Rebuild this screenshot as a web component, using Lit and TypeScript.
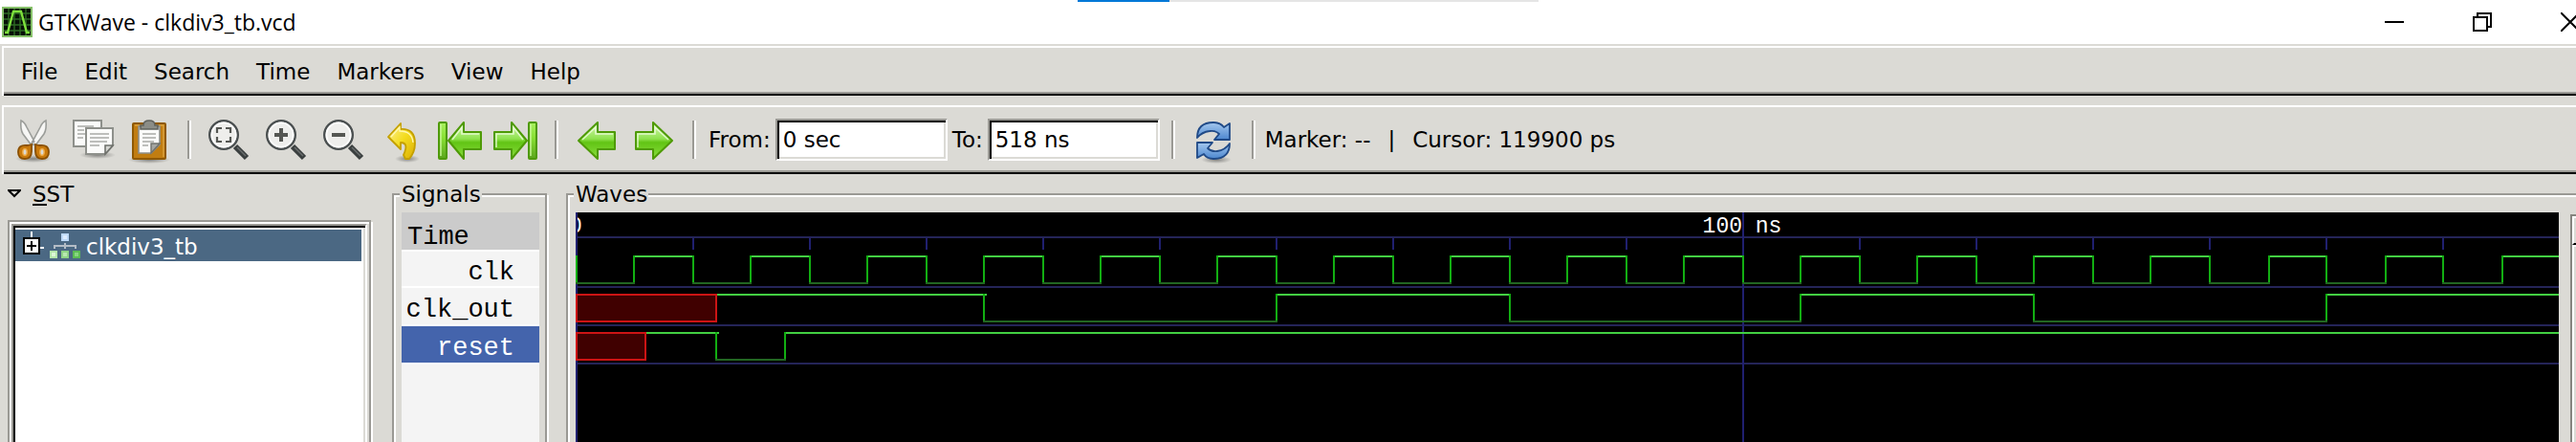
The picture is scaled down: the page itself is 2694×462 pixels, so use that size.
import { LitElement, html, svg, css } from "lit";
import { customElement, property } from "lit/decorators.js";

type Segment = { from: number; to: number; level: "0" | "1" | "x" };
type Signal = { name: string; selected?: boolean; segments: Segment[] };

const STEPS_PER_NS = 6.1035; // each step is two pixels wide
const SPAN = 180;

const timeToX = (t: number) => 2 * Math.floor(t * STEPS_PER_NS);

const clockSegments = (): Segment[] => {
  const out: Segment[] = [];
  for (let t = 0; t < SPAN; t += 5) {
    out.push({ from: t, to: t + 5, level: (t / 5) % 2 ? "1" : "0" });
  }
  return out;
};

const SIGNALS: Signal[] = [
  { name: "clk", segments: clockSegments() },
  {
    name: "clk_out",
    segments: [
      { from: 0, to: 12, level: "x" },
      { from: 12, to: 35, level: "1" },
      { from: 35, to: 60, level: "0" },
      { from: 60, to: 80, level: "1" },
      { from: 80, to: 105, level: "0" },
      { from: 105, to: 125, level: "1" },
      { from: 125, to: 150, level: "0" },
      { from: 150, to: SPAN, level: "1" },
    ],
  },
  {
    name: "reset",
    selected: true,
    segments: [
      { from: 0, to: 6, level: "x" },
      { from: 6, to: 12, level: "1" },
      { from: 12, to: 18, level: "0" },
      { from: 18, to: SPAN, level: "1" },
    ],
  },
];

const gradients = svg`<defs>
  <linearGradient id="green" x1="0" y1="0" x2="0" y2="1">
    <stop offset="0" stop-color="#d9f9b8"/><stop offset=".45" stop-color="#8fe24e"/>
    <stop offset=".55" stop-color="#62c414"/><stop offset="1" stop-color="#8ade40"/>
  </linearGradient>
  <linearGradient id="bar" x1="0" y1="0" x2="0" y2="1">
    <stop offset="0" stop-color="#a8f060"/><stop offset=".4" stop-color="#8ae234"/>
    <stop offset="1" stop-color="#5aa51c"/>
  </linearGradient>
  <linearGradient id="blue" x1="0" y1="0" x2="0" y2="1">
    <stop offset="0" stop-color="#a5c8ee"/><stop offset="1" stop-color="#4b86cf"/>
  </linearGradient>
  <linearGradient id="gold" x1="0" y1="0" x2="1" y2="1">
    <stop offset="0" stop-color="#fdf09a"/><stop offset=".5" stop-color="#f3dc1e"/>
    <stop offset="1" stop-color="#dcae06"/>
  </linearGradient>
  <radialGradient id="shade"><stop offset="0" stop-color="#000" stop-opacity=".4"/>
    <stop offset="1" stop-color="#000" stop-opacity="0"/></radialGradient>
</defs>`;

const lens = svg`
  <path d="M36 40l12 12" stroke="#3a3f3f" stroke-width="6"/>
  <path d="M38 41l9 9" stroke="#6a6e6e" stroke-width="1.5"/>
  <circle cx="24" cy="28" r="14.8" fill="#eeeeec" stroke="#4a4f50" stroke-width="2.4"/>
  <circle cx="24" cy="28" r="12.6" fill="none" stroke="#fff" stroke-width="1.6"/>`;

const leftArrow = (tip: number, neck: number, end: number) => svg`
  <path d="M${tip} 34L${neck} 15V25H${end}V43H${neck}V53Z" fill="url(#green)"
    stroke="#4e9a06" stroke-width="2" stroke-linejoin="round"/>
  <path d="M${tip + 4} 33L${neck - 2} 20V27H${end - 2}" fill="none" stroke="#effdde" stroke-opacity=".8" stroke-width="1.6"/>`;

const rightArrow = (tip: number, neck: number, end: number) => svg`
  <path d="M${tip} 34L${neck} 15V25H${end}V43H${neck}V53Z" fill="url(#green)"
    stroke="#4e9a06" stroke-width="2" stroke-linejoin="round"/>
  <path d="M${end + 2} 41V27H${neck + 2}V20L${tip - 4} 33" fill="none" stroke="#effdde" stroke-opacity=".8" stroke-width="1.6"/>`;

const bar = (x: number) => svg`
  <rect x="${x}" y="15" width="8" height="38" rx="1" fill="url(#bar)" stroke="#4e9a06" stroke-width="2"/>
  <path d="M${x + 2} 17v33" stroke="#c9f79a" stroke-width="1.4"/>`;

const ICONS: Record<string, unknown> = {
  cut: svg`
    <ellipse cx="29" cy="53" rx="19" ry="4" fill="url(#shade)"/>
    <path d="M16 13q-1 9 2 14l9 12 4-2-9-17q-2-5-6-7z" fill="#f6f6f4" stroke="#9b9d99" stroke-width="1.6"/>
    <path d="M42 13q1 9-2 14l-9 12-4-2 9-17q2-5 6-7z" fill="#f6f6f4" stroke="#9b9d99" stroke-width="1.6"/>
    <circle cx="29" cy="35" r="1.5" fill="#999"/>
    <path d="M27 38q-3 1-5 1-9-1-9 7 0 7 7 7 7 0 7-8z" fill="#c8790c" stroke="#8a5003" stroke-width="1.8"/>
    <path d="M31 38q3 1 5 1 9-1 9 7 0 7-7 7-7 0-7-8z" fill="#c8790c" stroke="#8a5003" stroke-width="1.8"/>
    <ellipse cx="20" cy="46" rx="2.2" ry="3.4" fill="#dbdad5" stroke="#f0ab45" stroke-width="1.4"/>
    <ellipse cx="38" cy="46" rx="2.2" ry="3.4" fill="#dbdad5" stroke="#f0ab45" stroke-width="1.4"/>`,
  copy: svg`
    <ellipse cx="36" cy="49" rx="19" ry="4" fill="url(#shade)"/>
    <rect x="11" y="13" width="29" height="27" fill="#fbfbfa" stroke="#8e908b" stroke-width="2"/>
    <path d="M15 19h17M15 23h7M15 27h9M15 31h6" stroke="#bdbebb" stroke-width="2"/>
    <path d="M24 21H52V39L44 48H24Z" fill="#fbfbfa" stroke="#8e908b" stroke-width="2"/>
    <path d="M28 27h20M28 31h20M28 35h18M28 39h10" stroke="#bdbebb" stroke-width="2"/>
    <path d="M52 39H44V48Z" fill="#d5d6d2" stroke="#6f716c" stroke-width="1.6"/>`,
  paste: svg`
    <ellipse cx="30" cy="54" rx="22" ry="4" fill="url(#shade)"/>
    <rect x="13" y="16" width="34" height="37" rx="1" fill="#c17d11" stroke="#8f5902" stroke-width="2"/>
    <path d="M15 18h30v33" fill="none" stroke="#dca23f" stroke-width="1.4"/>
    <path d="M19 19H41V38L32 47H19Z" fill="#fbfbfa" stroke="#8e908b" stroke-width="1.6"/>
    <path d="M23 27h14M23 31h14M23 35h12M23 39h6" stroke="#bdbebb" stroke-width="2"/>
    <path d="M41 37H32V47Z" fill="#a5a6a2" stroke="#6f716c" stroke-width="1.4"/>
    <path d="M21 22v-4h3q0-5 6-5t6 5h3v4z" fill="#8b8d87" stroke="#5f615c" stroke-width="1.6"/>`,
  fit: svg`${lens}<path d="M17 26v-5h5M26 21h5v5M31 30v5h-5M22 35h-5v-5" fill="none" stroke="#555753" stroke-width="2.2"/>`,
  zoomIn: svg`${lens}<path d="M24 21v14M17 28h14" stroke="#555753" stroke-width="4"/>`,
  zoomOut: svg`${lens}<path d="M17 28h14" stroke="#555753" stroke-width="4"/>`,
  undo: svg`
    <ellipse cx="36" cy="53" rx="13" ry="4" fill="url(#shade)"/>
    <path d="M16 30L29 16v6q15-1 15 15 0 9-6 16h-4l-2-4q6-13-3-13v7Z" fill="url(#gold)"
      stroke="#c4a000" stroke-width="1.8" stroke-linejoin="round"/>
    <path d="M19 30l9-10v4q13 0 14 12" fill="none" stroke="#fff7b0" stroke-width="1.3"/>`,
  first: svg`${leftArrow(19, 35, 53)}${bar(9)}`,
  last: svg`${rightArrow(41, 25, 7)}${bar(43)}`,
  back: svg`${leftArrow(11, 31, 49)}`,
  forward: svg`${rightArrow(49, 29, 11)}`,
  reload: svg`
    <ellipse cx="33" cy="54" rx="16" ry="4" fill="url(#shade)"/>
    <path d="M13 31q0-16 17-16 7 0 11 5l6-4v17H31l5-6q-4-4-10-3-8 1-13 7z" fill="url(#blue)"
      stroke="#204a87" stroke-width="1.8" stroke-linejoin="round"/>
    <path d="M47 37q0 16-17 16-7 0-10-5l-7 4V36h16l-5 6q4 4 10 3 8-1 13-8z" fill="url(#blue)"
      stroke="#204a87" stroke-width="1.8" stroke-linejoin="round"/>`,
};

@customElement("tool-button")
export class ToolButton extends LitElement {
  @property() icon = "";
  @property() label = "";

  static styles = css`
    :host { display: block; flex: none; }
    .tool { display: block; width: 60px; height: 66px; padding: 0; border: 0; background: none; }
    .glyph { display: block; width: 60px; height: 66px; }
  `;

  render() {
    return html`<button class="tool" type="button" aria-label=${this.label}>
      <svg class="glyph" viewBox="0 0 60 66" fill="none" aria-hidden="true">${gradients}${ICONS[this.icon]}</svg>
    </button>`;
  }
}

@customElement("wave-canvas")
export class WaveCanvas extends LitElement {
  static styles = css`
    :host { display: block; flex: 1; min-width: 0; min-height: 0; overflow: hidden; background: #000; }
    .plot { display: block; width: 100%; height: 100%; }
    .grid { fill: #242458; }
    .mark { fill: #202070; }
    .high { fill: #42cf42; }
    .low { fill: #226622; }
    .edge { fill: #12ae12; }
    .unknown { fill: #400000; stroke: #cc1414; stroke-width: 2; }
    .scale { fill: #fff; font: 23px "Liberation Mono", monospace; text-anchor: middle; }
  `;

  private trace(signal: Signal, row: number) {
    const top = 45 + row * 40;
    return signal.segments.map((s, i) => {
      const x = timeToX(s.from);
      const w = timeToX(s.to) - x + 2;
      if (s.level === "x") {
        return svg`<rect class="unknown" x=${x + 1} y=${top + 1} width=${w - 2} height="28"/>`;
      }
      const afterUnknown = i > 0 && signal.segments[i - 1].level === "x";
      return svg`
        <rect class=${s.level === "1" ? "high" : "low"} x=${afterUnknown ? x + 2 : x}
          y=${s.level === "1" ? top : top + 28} width=${w} height="2"/>
        ${afterUnknown ? null : svg`<rect class="edge" x=${x} y=${top} width="2" height="28"/>`}`;
    });
  }

  render() {
    const ticks: number[] = [];
    for (let t = 10; t < 170; t += 10) ticks.push(t);
    return html`<svg class="plot" role="img" aria-label="Waveforms">
      <text class="scale" x="0" y="21">0</text>
      <text class="scale" x=${timeToX(100)} y="21">100 ns</text>
      <rect class="grid" y="25" width="100%" height="2"/>
      ${ticks.map((t) => svg`<rect class="mark" x=${timeToX(t)} y="27" width="2" height="12"/>`)}
      ${SIGNALS.map((_, i) => svg`<rect class="grid" y=${77 + i * 40} width="100%" height="2"/>`)}
      <rect class="mark" width="2" height="100%"/>
      <rect class="mark" x=${timeToX(100)} width="2" height="100%"/>
      ${SIGNALS.map((s, i) => this.trace(s, i))}
    </svg>`;
  }
}

@customElement("app-root")
export class AppRoot extends LitElement {
  static styles = css`
    :host {
      display: flex; flex-direction: column; height: 100vh; overflow: hidden;
      background: #dbdad5; color: #000;
      font: 23px/28px "DejaVu Sans", sans-serif;
    }
    * { box-sizing: border-box; }
    .title-bar {
      position: relative; flex: none; display: flex; align-items: center; height: 46px;
      padding-left: 2px; gap: 6px; background: #fff; overflow: hidden;
    }
    .title { flex: 1; margin: 0; font: 23px/32px "Open Sans", "Noto Sans", sans-serif; white-space: nowrap; }
    .logo { flex: none; display: block; }
    .progress {
      position: absolute; top: 0; left: calc(50% - 220px); width: 482px; height: 2px; background: #e5e5e5;
    }
    .progress-done { width: 96px; height: 2px; background: #0078d7; }
    .controls { display: flex; margin-right: -40px; }
    .control { width: 92px; height: 44px; padding: 0; border: 0; background: none; }
    .control-glyph { display: block; margin: 0 auto; }
    .bar {
      flex: none; display: flex; align-items: center; margin-left: 2px;
      border: solid; border-width: 2px 0 0 2px; border-color: #fff;
      box-shadow: inset 0 -2px #000, inset 0 -4px #9a9994;
    }
    .menu-bar { margin-top: 2px; height: 52px; padding: 4px; }
    .menu { padding: 0 14px; border: 0; background: none; font: inherit; color: inherit; }
    .tool-bar { margin-top: 10px; height: 72px; padding: 2px 2px 4px; white-space: nowrap; }
    .divider { flex: none; width: 4px; height: 40px; margin: 0 10px; border-left: 2px solid #9a9994; border-right: 2px solid #fff; }
    .entry-label { margin: 0 5px 0 3px; }
    .entry {
      width: 180px; height: 44px; margin: 0 2px 0 0; padding: 0 6px; background: #fff; font: inherit; color: inherit;
      border: 2px solid; border-color: #9a9994 #fff #fff #9a9994; border-radius: 0;
      box-shadow: inset 2px 2px #000, inset -2px -2px #dbdad5; outline: 0;
    }
    .status { display: flex; gap: 18px; margin: 0; }
    .panes { flex: 1; min-height: 0; display: flex; overflow: hidden; }
    .sst { flex: none; width: 390px; display: flex; flex-direction: column; padding: 7px 0 0 8px; }
    .sst-head { display: flex; align-items: center; gap: 12px; height: 28px; padding: 0; border: 0; background: none; font: inherit; color: inherit; }
    .mnemonic { border-bottom: 2px solid #000; line-height: 20px; display: inline-block; height: 22px; }
    .tree-frame {
      flex: 1; display: flex; margin: 13px 2px -8px 0; padding: 2px;
      border: 2px solid #9a9994; box-shadow: 2px 2px #fff, inset 2px 2px #fff;
    }
    .tree {
      flex: 1; margin: 0; padding: 4px 4px 0 2px; list-style: none; background: #fff;
      border: 2px solid; border-color: #9a9994 #fff #fff #9a9994;
      box-shadow: inset 2px 2px #000, inset -2px 0 #dbdad5;
    }
    .node { display: flex; align-items: center; height: 33px; gap: 6px; padding: 2px 0 0 8px; background: #4b6883; color: #fff; }
    .expander { flex: none; display: block; width: 60px; height: 32px; }
    .frame {
      min-width: 0; display: flex; flex-direction: column; margin: 7px 0 -8px; padding: 5px 6px 0 8px;
      border: 2px solid #9a9994; box-shadow: 2px 2px #fff, inset 2px 2px #fff;
    }
    .legend { margin-left: -2px; padding: 0 1px 0 2px; background: #dbdad5; line-height: 28px; }
    .signals-frame { flex: none; width: 162px; margin-left: 20px; }
    .waves-frame { flex: 1; margin-left: 20px; padding-right: 18px; border-right: 0; }
    .names { flex: 1; background: #f4f4f4; font: 27px/38px "Liberation Mono", monospace; }
    .name, .names-head { border-bottom: 2px solid #fff; }
    .names-head { height: 41px; padding: 8px 0 0 6px; line-height: 36px; background: #cbcbcb; }
    .name { height: 40px; padding: 4px 26px 0 0; text-align: right; }
    .name:nth-child(2) { height: 38px; line-height: 36px; }
    .selected { background: #4464ac; color: #fff; }
    .wave-body { flex: 1; min-height: 0; display: flex; }
    .scroller {
      flex: none; width: 20px; margin: 42px -14px -8px -6px; border: 2px solid #85847f; border-right: 0;
      background: #dbdad5;
    }
    .thumb { height: 30px; border: 2px solid #fff; border-width: 2px 0 0 2px; border-bottom: 2px solid #000; }
    .trough { height: 100%; border: 2px solid #fff; border-right: 0; }
  `;

  private tool(icon: string, label: string) {
    return html`<tool-button icon=${icon} label=${label}></tool-button>`;
  }

  render() {
    return html`
      <header class="title-bar">
        <svg class="logo" width="32" height="32" viewBox="0 0 32 32" aria-hidden="true">
          <rect x="1" y="1" width="30" height="30" fill="#061006" stroke="#86c06a" stroke-width="2"/>
          <path d="M7 2v28M13 2v28M19 2v28M25 2v28M2 7h28M2 13h28M2 19h28M2 25h28" stroke="#2e6a24" stroke-width="1.4"/>
          <path d="M3 27h3L12 5h8l6 22h3" fill="none" stroke="#7ee03c" stroke-width="2.4"/>
        </svg>
        <h1 class="title">GTKWave - clkdiv3_tb.vcd</h1>
        <div class="progress"><div class="progress-done"></div></div>
        <div class="controls">
          <button class="control" aria-label="Minimize">
            <svg class="control-glyph" width="20" height="20"><path d="M0 10h20" stroke="#000" stroke-width="2"/></svg>
          </button>
          <button class="control" aria-label="Restore">
            <svg class="control-glyph" width="20" height="20" fill="none" stroke="#000" stroke-width="2"><path d="M1 5h14v14H1zM5 5V1h14v14h-4"/></svg>
          </button>
          <button class="control" aria-label="Close">
            <svg class="control-glyph" width="20" height="20"><path d="M0 0l20 20M20 0L0 20" stroke="#000" stroke-width="2"/></svg>
          </button>
        </div>
      </header>

      <nav class="bar menu-bar">
        ${["File", "Edit", "Search", "Time", "Markers", "View", "Help"].map(
          (m) => html`<button class="menu" type="button">${m}</button>`,
        )}
      </nav>

      <div class="bar tool-bar" role="toolbar">
        ${this.tool("cut", "Cut")}${this.tool("copy", "Copy")}${this.tool("paste", "Paste")}
        <span class="divider"></span>
        ${this.tool("fit", "Zoom fit")}${this.tool("zoomIn", "Zoom in")}${this.tool("zoomOut", "Zoom out")}
        ${this.tool("undo", "Undo zoom")}${this.tool("first", "To start")}${this.tool("last", "To end")}
        <span class="divider"></span>
        ${this.tool("back", "Previous edge")}${this.tool("forward", "Next edge")}
        <span class="divider"></span>
        <label class="entry-label" for="from">From:</label>
        <input class="entry" id="from" .value=${"0 sec"} />
        <label class="entry-label" for="to">To:</label>
        <input class="entry" id="to" .value=${"518 ns"} />
        <span class="divider"></span>
        ${this.tool("reload", "Reload")}
        <span class="divider"></span>
        <p class="status"><span>Marker: --</span><span>|</span><span>Cursor: 119900 ps</span></p>
      </div>

      <main class="panes">
        <section class="sst">
          <button class="sst-head" type="button">
            <svg width="14" height="10" aria-hidden="true"><path d="M1 1h12L7 7z" fill="#dbdad5" stroke="#000" stroke-width="2"/></svg>
            <span><span class="mnemonic">S</span>ST</span>
          </button>
          <div class="tree-frame">
            <ul class="tree">
              <li class="node">
                <svg class="expander" viewBox="0 0 60 32" aria-hidden="true">
                  <path d="M9 0v6M18 17h4" stroke="#fff" stroke-width="2"/>
                  <rect x="1" y="7" width="16" height="16" fill="#fff" stroke="#000" stroke-width="2"/>
                  <path d="M4 15h10M9 10v10" stroke="#000" stroke-width="2"/>
                  <path d="M33 18v-3h22v3M44 12v6" fill="none" stroke="#b4bcc6" stroke-width="2"/>
                  <rect x="40" y="2" width="8" height="8" fill="#bcd8f8"/>
                  <rect x="28" y="20" width="8" height="8" fill="#b4e6ac"/>
                  <rect x="40" y="20" width="8" height="8" fill="#8ed486"/>
                  <rect x="52" y="20" width="8" height="8" fill="#5cbc54"/>
                  <path d="M42 4h4v4h-4z" fill="#dcecff"/><path d="M30 22h4v4h-4z" fill="#dcf6d6"/>
                  <path d="M42 22h4v4h-4z" fill="#b8e8b0"/><path d="M54 22h4v4h-4z" fill="#88d680"/>
                </svg>
                <span>clkdiv3_tb</span>
              </li>
            </ul>
          </div>
        </section>

        <fieldset class="frame signals-frame">
          <legend class="legend">Signals</legend>
          <div class="names">
            <div class="names-head">Time</div>
            ${SIGNALS.map((s) => html`<div class="name ${s.selected ? "selected" : ""}">${s.name}</div>`)}
          </div>
        </fieldset>

        <fieldset class="frame waves-frame">
          <legend class="legend">Waves</legend>
          <div class="wave-body"><wave-canvas></wave-canvas></div>
        </fieldset>
        <div class="scroller"><div class="thumb"></div><div class="trough"></div></div>
      </main>
    `;
  }
}
